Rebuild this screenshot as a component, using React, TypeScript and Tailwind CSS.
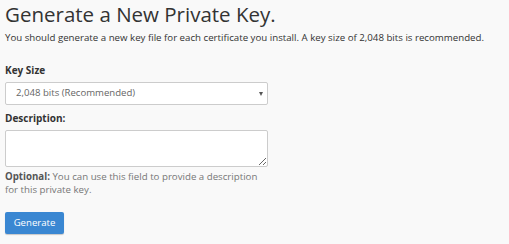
export default function App() {
  return (
    <div
      className="h-[244px] w-[509px] overflow-hidden bg-[#f9f9f9] px-[5px] pt-[1px] text-[#333]"
      style={{ fontFamily: '"Open Sans", sans-serif' }}
    >
      <h1 className="text-[20.5px] leading-[26px] font-normal text-[#333]">Generate a New Private Key.</h1>
      <p className="mt-[4px] text-[9.7px] leading-[14px] text-[#333]">
        You should generate a new key file for each certificate you install. A key size of 2,048 bits is
        recommended.
      </p>

      <div className="mt-[18px]">
        <label className="block text-[10px] leading-[14px] font-bold">Key Size</label>
        <div className="relative mt-[5px] flex h-[23px] w-[263px] items-center rounded-[2px] border border-[#ccc] bg-white pl-[10px] text-[9.6px] text-[#666]">
          2,048 bits (Recommended)
          <span className="absolute right-[4px] top-[9px] h-0 w-0 border-x-[2.5px] border-t-[4px] border-x-transparent border-t-[#555]" />
        </div>
      </div>

      <div className="mt-[6px]">
        <label className="block text-[10px] leading-[14px] font-bold">Description:</label>
        <textarea className="mt-[5px] block h-[37px] w-[263px] rounded-[2px] border border-[#ccc] bg-white" />
        <p className="mt-[3px] w-[262px] text-[9.7px] leading-[13px] text-[#777]">
          <span className="font-bold text-[#555]">Optional:</span> You can use this field to provide a
          description for this private key.
        </p>
      </div>

      <button className="mt-[16px] h-[22px] w-[59px] rounded-[2px] bg-[#3a87d2] text-[9.6px] text-white shadow-[0_1px_1px_rgba(0,0,0,0.2)]">
        Generate
      </button>
    </div>
  )
}
